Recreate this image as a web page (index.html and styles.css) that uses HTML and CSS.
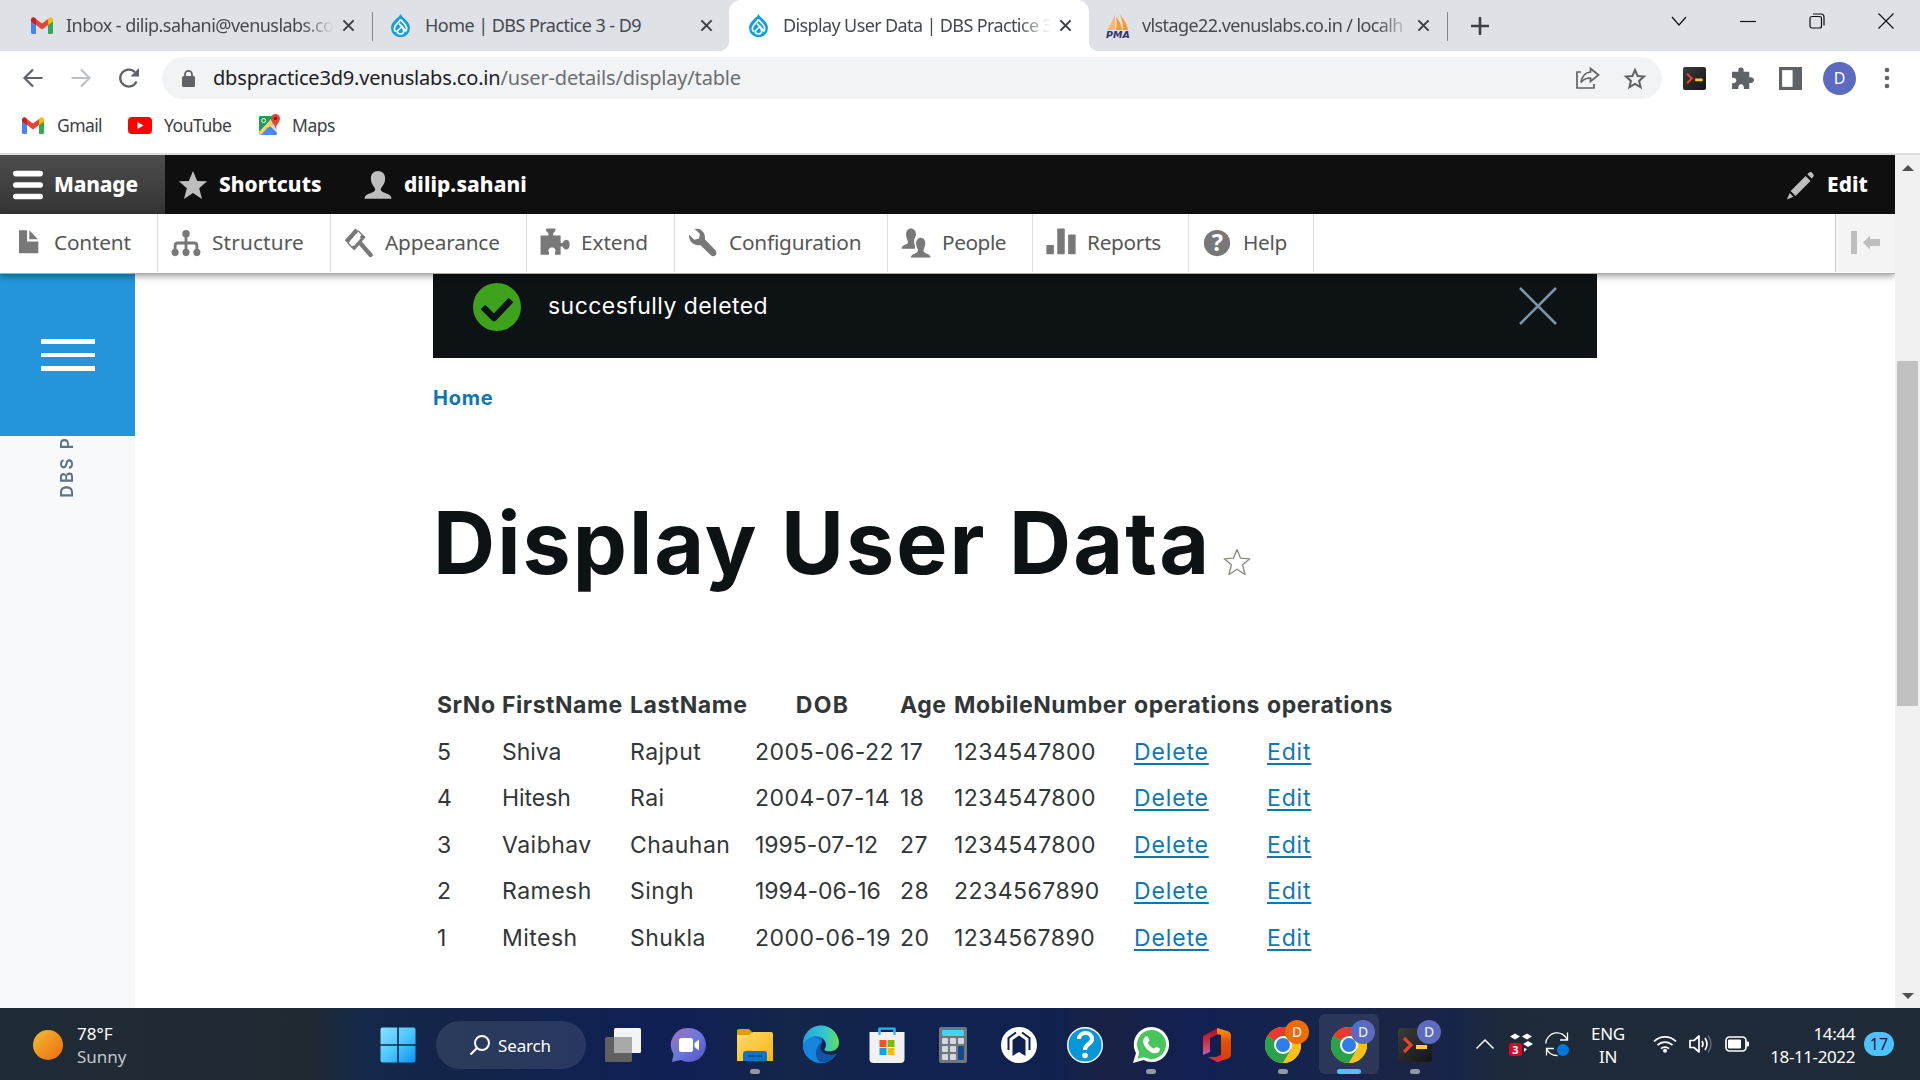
FILE: index.html
```html
<!DOCTYPE html>
<html lang="en">
<head>
<meta charset="utf-8">
<title>Display User Data | DBS Practice 3 - D9</title>
<link rel="stylesheet" href="styles.css">
</head>
<body>
<svg class="defs" width="0" height="0">
  <defs>
    <linearGradient id="win" x1="0" y1="0" x2="1" y2="1"><stop offset="0" stop-color="#8be0ff"/><stop offset=".5" stop-color="#4cc8fb"/><stop offset="1" stop-color="#0b93f5"/></linearGradient>
    <linearGradient id="sun" x1="0" y1="0" x2="1" y2="1"><stop offset="0" stop-color="#f0bd36"/><stop offset="1" stop-color="#f06a0c"/></linearGradient>
    <linearGradient id="chat" x1="0" y1="0" x2="1" y2="1"><stop offset="0" stop-color="#a770b4"/><stop offset=".5" stop-color="#6b78dc"/><stop offset="1" stop-color="#5450c4"/></linearGradient>
    <linearGradient id="folder" x1="0" y1="0" x2="1" y2="1"><stop offset="0" stop-color="#ffdb70"/><stop offset="1" stop-color="#f8b50c"/></linearGradient>
    <linearGradient id="edge1" x1="0" y1="0" x2="1" y2="0"><stop offset="0" stop-color="#22a7e0"/><stop offset=".6" stop-color="#35c5d0"/><stop offset="1" stop-color="#62e052"/></linearGradient>
    <linearGradient id="term" x1="0" y1="0" x2="1" y2="1"><stop offset="0" stop-color="#3b3b3d"/><stop offset="1" stop-color="#151515"/></linearGradient>
    <linearGradient id="office" x1="0" y1="0" x2="0" y2="1"><stop offset="0" stop-color="#ff9a10"/><stop offset=".4" stop-color="#e34f04"/><stop offset="1" stop-color="#d83b01"/></linearGradient>
    <linearGradient id="office2" x1="0" y1="0" x2="0" y2="1"><stop offset="0" stop-color="#a80f12"/><stop offset=".7" stop-color="#d04060"/><stop offset="1" stop-color="#b860c8"/></linearGradient>
    <symbol id="gmail" viewBox="0 0 22 17"><path d="M0 3v12.500A1.500 1.500 0 0 0 1.500 17H5V6z" fill="#4285f4"/><path d="M22 3v12.500A1.500 1.500 0 0 1 20.500 17H17V6z" fill="#34a853"/><path d="M5 2l6 4.500L17 2v6l-6 4.500L5 8z" fill="#ea4335"/><path d="M0 2.500C0 .3 2.300-.6 4 .8L5 2v6L0 4.500z" fill="#c5221f"/><path d="M22 2.500C22 .3 19.700-.6 18 .8L17 2v6l5-3.500z" fill="#fbbc04"/></symbol>
    <symbol id="drupal" viewBox="0 0 19 23"><path d="M9.500 0C11 4 19 7 19 14a9.500 9.200 0 0 1-19 0C0 7 8 4 9.500 0z" fill="#0f9fe0"/><path d="M9.500 5.500C7.500 9 3.500 11 3.300 14.500c0 1.500.6 2.500 1.500 3.200M8 9.500l6.200 6.700M9.500 5.500C12 9 15.700 11 15.700 14.500c0 1.500-.6 2.500-1.500 3.200M11 12.500L6.200 17c0 4 6.600 4 6.600 0z" fill="none" stroke="#fff" stroke-width="1.700"/></symbol>
    <symbol id="x" viewBox="0 0 14 14"><path d="M1.500 1.500l11 11M12.500 1.500l-11 11" stroke="#3c4043" stroke-width="2.200"/></symbol>
    <symbol id="terminal" viewBox="0 0 34 34"><rect width="34" height="34" rx="3" fill="url(#term)"/><path d="M6 10l7 7-7 7" fill="none" stroke="#e8402f" stroke-width="3.200"/><rect x="18" y="17" width="11" height="4" fill="#ffcb2e"/></symbol>
    <symbol id="chrome" viewBox="0 0 36 36"><circle cx="18" cy="18" r="18" fill="#fbc116"/><path d="M18 18L2.400 9A18 18 0 0 1 33.600 9z" fill="#e33b2e"/><path d="M18 18L2.400 9A18 18 0 0 0 18 36l8-13.500z" fill="#2aa24c"/><path d="M18 9h15.600A18 18 0 0 1 18 36l8-13.500z" fill="#fbc116"/><circle cx="18" cy="18" r="9" fill="#fff"/><circle cx="18" cy="18" r="7" fill="#2f7de9"/></symbol>
  </defs>
</svg>

<header class="tabs">
  <div class="tab tab-1"><svg class="fav mail"><use href="#gmail"/></svg><span class="tab-title fade">Inbox - dilip.sahani@venuslabs.co</span><svg class="close"><use href="#x"/></svg></div>
  <div class="tab tab-2"><svg class="fav drop"><use href="#drupal"/></svg><span class="tab-title">Home | DBS Practice 3 - D9</span><svg class="close"><use href="#x"/></svg></div>
  <div class="tab tab-3"><svg class="fav drop"><use href="#drupal"/></svg><span class="tab-title fade">Display User Data | DBS Practice 3</span><svg class="close"><use href="#x"/></svg></div>
  <div class="tab tab-4"><svg class="fav pma" viewBox="0 0 24 24"><path d="M9 1v15H1c3-4 5-9 8-15z" fill="#f7b877"/><path d="M10 3c1 5 1 9 0 13h6C15 10 13 6 10 3zM13 0c4 4 8 9 9 16h-5C17 9 16 4 13 0z" fill="#f8992d"/><text x="0" y="23.500" class="pma-text">PMA</text></svg><span class="tab-title fade">vlstage22.venuslabs.co.in / localh</span><svg class="close"><use href="#x"/></svg></div>
  <svg class="plus" viewBox="0 0 18 18"><path d="M9 0v18M0 9h18" stroke="#3c4043" stroke-width="2.600"/></svg>
  <div class="window-controls">
    <svg viewBox="0 0 16 16"><path d="M1 4l7 8 7-8" fill="none" stroke="#111" stroke-width="1.200"/></svg>
    <svg viewBox="0 0 16 16"><path d="M0 8.500h16" stroke="#111" stroke-width="1.200"/></svg>
    <svg viewBox="0 0 16 16"><rect x="1" y="3.500" width="11.500" height="11.500" rx="2" fill="none" stroke="#111" stroke-width="1.200"/><path d="M4 1h8a3 3 0 0 1 3 3v8.500" fill="none" stroke="#111" stroke-width="1.200"/></svg>
    <svg viewBox="0 0 16 16"><path d="M.5.5l15 15M15.500.5l-15 15" stroke="#111" stroke-width="1.200"/></svg>
  </div>
</header>

<nav class="nav">
  <div class="nav-buttons">
    <svg viewBox="0 0 20 20"><path d="M19.500 10H2M10 1.500L1.500 10l8.500 8.500" fill="none" stroke="#5f6368" stroke-width="2.200"/></svg>
    <svg viewBox="0 0 20 20"><path d="M.5 10H18M10 1.500l8.500 8.500-8.500 8.500" fill="none" stroke="#bdc0c3" stroke-width="2.200"/></svg>
    <svg viewBox="0 0 20 20"><path d="M17.500 13.500A8.500 8.500 0 1 1 16 4.300" fill="none" stroke="#5f6368" stroke-width="2.300"/><path d="M20 0v8.500h-8.500z" fill="#5f6368"/></svg>
  </div>
  <div class="omnibox">
    <svg class="lock" viewBox="0 0 13 17"><rect y="6" width="13" height="11" rx="1.500" fill="#5f6368"/><path d="M3 7V4.300a3.500 3.500 0 0 1 7 0V7" fill="none" stroke="#5f6368" stroke-width="1.800"/></svg>
    <span class="url"><b>dbspractice3d9.venuslabs.co.in</b>/user-details/display/table</span>
    <svg class="share" viewBox="0 0 24 22"><path d="M5 5H1v16h17v-4" fill="none" stroke="#5f6368" stroke-width="1.700"/><path d="M14.500 1.500L22.500 8l-8 6.500V11C10 11 7.500 12 5 15.500 6 9 9 5.500 14.500 5z" fill="none" stroke="#5f6368" stroke-width="1.700"/></svg>
    <svg class="fav-star" viewBox="0 0 22 21"><path d="M11 2l2.600 6 6.400.6-4.900 4.300 1.500 6.300L11 15.900l-5.600 3.300 1.500-6.300L2 8.600 8.400 8z" fill="none" stroke="#5f6368" stroke-width="2"/></svg>
  </div>
  <div class="extensions">
    <svg><use href="#terminal"/></svg>
    <svg viewBox="0 0 22 22"><path d="M1 4.500h6.200C5.500-1 13.500-1 12 4.500h5.500V10c6-1.500 6 6.500 0 5v6h-5.200c1-6-6.300-6-5.300 0H1v-5.500c5.500 1 5.500-6 0-5z" fill="#5f6368"/></svg>
    <svg viewBox="0 0 22 22"><rect x="1.500" y="1.500" width="19" height="19" fill="none" stroke="#5f6368" stroke-width="3"/><rect x="13" y="1" width="8" height="20" fill="#5f6368"/></svg>
  </div>
  <div class="avatar">D</div>
  <svg class="dots" viewBox="0 0 6 22"><circle cx="3" cy="3" r="2.300" fill="#5f6368"/><circle cx="3" cy="11" r="2.300" fill="#5f6368"/><circle cx="3" cy="19" r="2.300" fill="#5f6368"/></svg>
</nav>

<div class="bookmarks">
  <svg class="bm-icon"><use href="#gmail"/></svg><span class="bm bm-gmail">Gmail</span>
  <svg class="bm-icon yt" viewBox="0 0 24 17"><rect width="24" height="17" rx="4" fill="#f00"/><path d="M9.500 5v7l6-3.500z" fill="#fff"/></svg><span class="bm bm-yt">YouTube</span>
  <svg class="bm-icon maps" viewBox="0 0 21 22"><rect x="0" y="2" width="18" height="19" rx="2" fill="#3d84ee"/><path d="M0 4a2 2 0 0 1 2-2h12L0 17z" fill="#1f9d54"/><path d="M0 18L15 2l3 3L3 21H2a2 2 0 0 1-2-2z" fill="#fdd34d"/><path d="M9 13l9 8H2z" fill="#4b8bf5"/><path d="M11 12l7-5v12z" fill="#d8dadd"/><path d="M16.500 0a4.500 4.500 0 0 1 4.500 4.500c0 4-3.700 5-4.500 10.500-.8-5.500-4.500-6.500-4.500-10.500A4.500 4.500 0 0 1 16.500 0z" fill="#e24536"/><circle cx="16.500" cy="4.500" r="1.700" fill="#7d1c14"/><circle cx="4.700" cy="6.500" r="2" fill="none" stroke="#fff"/></svg><span class="bm">Maps</span>
</div>

<div class="viewport">
  <div class="page">
    <div class="admin-bar">
      <div class="admin-tab manage"><svg viewBox="0 0 16 16"><path d="M1.500 1.900h13M1.500 8h13M1.500 14.100h13" stroke="#fff" stroke-width="3" stroke-linecap="round"/></svg><span>Manage</span></div>
      <div class="admin-tab shortcuts"><svg viewBox="0 0 16 16"><path d="M8 .5l2.200 5.300 5.300.2-4.200 3.700 1.500 5.700L8 12.300l-4.800 3.100 1.500-5.700L.5 6l5.300-.2z" fill="#bebebe"/></svg><span>Shortcuts</span></div>
      <div class="admin-tab user"><svg viewBox="0 0 16 16"><path d="M.8 15.300c0-3.300 5.400-2.500 5.700-4.800.1-1.500-2.300-2.500-2.300-6C4.200 2 5.700.5 8 .5s3.800 1.500 3.800 4c0 3.500-2.400 4.500-2.300 6 .3 2.300 5.700 1.500 5.700 4.800z" fill="#bebebe"/></svg><span>dilip.sahani</span></div>
      <div class="admin-tab edit"><svg viewBox="0 0 16 16"><path d="M11 3.200l2.600 2.600-8 8L3 11.200zM11.900 2.300l.8-.9c.6-.6 1.400-.3 2 .3.600.6.9 1.400.3 2l-.8.8zM2.500 12.200l2 2L1 15.700z" fill="#bebebe"/></svg><span>Edit</span></div>
    </div>
    <div class="tray">
      <div class="menu m1"><svg viewBox="0 0 16 16"><path d="M3.200 1.200h4.300v6h6v6.300H3.200zM8.700 1.200l4.600 4.800H8.700z"/></svg><span>Content</span></div>
      <div class="menu m2"><svg viewBox="0 0 16 16"><circle cx="8" cy="3" r="2"/><ellipse cx="2.200" cy="13" rx="1.900" ry="2"/><ellipse cx="8" cy="13" rx="1.900" ry="2"/><ellipse cx="13.800" cy="13" rx="1.900" ry="2"/><path d="M8 3v10M2.200 12V9.500q0-1.500 1.500-1.500h8.600q1.500 0 1.500 1.500V12" class="line"/></svg><span>Structure</span></div>
      <div class="menu m3"><svg viewBox="0 0 16 16"><path d="M.4 6.500L6 .2l1.800 1.500L2.200 8.200z"/><path d="M7.500 1.500l3.500 3.500-5.500 6.500-3.500-3.500" fill="none" stroke="#787878" stroke-width=".7"/><path d="M11.200 4.800L5.500 11.600 4 10.200l5.600-6.800z"/><path d="M9 8.500l5.200 5.900" stroke="#787878" stroke-width="2.300" stroke-linecap="round"/><path d="M6.500 3.200l2.500 2.200-3.700 4.200-2.300-2.300z" fill="#fff"/></svg><span>Appearance</span></div>
      <div class="menu m4"><svg viewBox="0 0 16 16"><path d="M.3 4h4.200V2.800L3.300 1.600V.3h4.900v1.300L7 2.800V4h4v4h1c.6-1.200 1.500-1.700 2.300-1.700 2 0 2 5.200 0 5.200-.8 0-1.700-.5-2.300-1.700h-1v4.500H8V13c1.800-3.500-5-3.500-3.200 0v1.300H.3z"/></svg><span>Extend</span></div>
      <div class="menu m5"><svg viewBox="0 0 16 16"><path d="M3.500.5C6.500-.3 9.500 2 9 6l5.700 6c1.500 2-.8 4-2.500 2.500L6.500 9C3 9.800.3 7 .5 3.500l2.800 2.700 2.600-.6.400-2.500z"/></svg><span>Configuration</span></div>
      <div class="menu m6"><svg viewBox="0 0 16 16"><path d="M.3 11c0-2.400 3.400-1.800 3.400-3.400 0-1-1-2-1-4C2.700 1.500 3.800.3 5.300.3S8 1.500 8 3.500c0 1-1 2-1 3.500 0 2 1 3 .3 4z"/><path d="M5 16c0-2.800 3.800-2.200 3.800-4 0-1-1-1.800-1-3.700 0-2 1.200-3.300 2.700-3.300s2.700 1.300 2.700 3.300c0 1.900-1 2.700-1 3.700 0 1.800 3.800 1.200 3.800 4z" stroke="#fff" stroke-width=".5"/></svg><span>People</span></div>
      <div class="menu m7"><svg viewBox="0 0 16 16"><rect x=".2" y="9" width="4" height="5" rx=".4"/><rect x="6" y=".2" width="4" height="13.800" rx=".4"/><rect x="11.800" y="3.500" width="4" height="10.500" rx=".4"/></svg><span>Reports</span></div>
      <div class="menu m8"><svg viewBox="0 0 16 16"><circle cx="8" cy="8" r="7"/><text x="8" y="12.500" class="q">?</text></svg><span>Help</span></div>
      <div class="toggle"><svg viewBox="0 0 30 24"><rect width="6" height="23" fill="#bebebe"/><path d="M12 11.500l7-7V8h10v7H19v3.500z" fill="#bebebe"/></svg></div>
    </div>

    <div class="columns">
      <aside class="side">
        <div class="burger"><i></i><i></i><i></i></div>
        <div class="site-name"><span>DBS P</span></div>
      </aside>
      <main class="main">
        <div class="message">
          <svg class="ok" viewBox="0 0 48 48"><circle cx="24" cy="24" r="24" fill="#3fa21c"/><path d="M10 24l11 11 17-18" fill="none" stroke="#0d1214" stroke-width="6.500" stroke-linejoin="round"/></svg>
          <span>succesfully deleted</span>
          <svg class="dismiss" viewBox="0 0 38 38"><path d="M1 1l36 36M37 1L1 37" stroke="#7e96a7" stroke-width="2.600"/></svg>
        </div>
        <a class="crumb">Home</a>
        <h1><span>Display User Data</span><svg viewBox="0 0 28 28"><path d="M14 1.500l3.500 8.700 9.300.6-7.200 6 2.400 9.700-8-5.300-8 5.300 2.400-9.700-7.200-6 9.300-.6z" fill="none" stroke="#8a8a7a" stroke-width="1.300" stroke-linejoin="round"/></svg></h1>
        <table>
          <thead><tr><th>SrNo</th><th>FirstName</th><th>LastName</th><th class="dob">DOB</th><th>Age</th><th>MobileNumber</th><th>operations</th><th>operations</th></tr></thead>
          <tbody>
            <tr><td>5</td><td class="tight">Shiva</td><td>Rajput</td><td>2005-06-22</td><td>17</td><td>1234547800</td><td><a>Delete</a></td><td><a>Edit</a></td></tr>
            <tr><td>4</td><td class="tight">Hitesh</td><td>Rai</td><td>2004-07-14</td><td>18</td><td>1234547800</td><td><a>Delete</a></td><td><a>Edit</a></td></tr>
            <tr><td>3</td><td>Vaibhav</td><td>Chauhan</td><td class="tight">1995-07-12</td><td>27</td><td>1234547800</td><td><a>Delete</a></td><td><a>Edit</a></td></tr>
            <tr><td>2</td><td>Ramesh</td><td>Singh</td><td class="tight">1994-06-16</td><td>28</td><td>2234567890</td><td><a>Delete</a></td><td><a>Edit</a></td></tr>
            <tr><td>1</td><td>Mitesh</td><td>Shukla</td><td>2000-06-19</td><td>20</td><td>1234567890</td><td><a>Delete</a></td><td><a>Edit</a></td></tr>
          </tbody>
        </table>
      </main>
    </div>
  </div>
  <div class="scrollbar"><i class="up"></i><i class="thumb"></i><i class="down"></i></div>
</div>

<footer class="taskbar">
  <div class="weather"><svg viewBox="0 0 30 30"><circle cx="15" cy="15" r="15" fill="url(#sun)"/></svg><div class="lines"><span>78°F</span><br><span class="dim">Sunny</span></div></div>
  <div class="slot start"><svg viewBox="0 0 36 36"><path d="M.5 2.500a2 2 0 0 1 2-2h14.700v16.700H.5zM18.800.5h14.700a2 2 0 0 1 2 2v14.700H18.800zM.5 18.800h16.700v16.700H2.500a2 2 0 0 1-2-2zM18.800 18.800h16.700v14.700a2 2 0 0 1-2 2H18.800z" fill="url(#win)"/></svg></div>
  <div class="search"><svg viewBox="0 0 20 20"><circle cx="12" cy="8" r="7" fill="none" stroke="#fff" stroke-width="2"/><path d="M7 13l-6.500 6.500" stroke="#fff" stroke-width="2.200"/></svg><span class="lines">Search</span></div>
  <div class="slot"><svg viewBox="0 0 36 36"><rect x="9" y="1" width="27" height="25" rx="1.500" fill="#f4f4f4"/><rect y="10" width="27" height="25" rx="1.500" fill="#606060"/><rect x="9" y="10" width="18" height="16" fill="#a9a9a9"/></svg></div>
  <div class="slot"><svg viewBox="0 0 36 36"><path d="M18 1a17 17 0 1 1-8 32L1 35l1.500-8A17 17 0 0 1 18 1z" fill="url(#chat)"/><rect x="8" y="11" width="14" height="14" rx="2.500" fill="#fff"/><path d="M23.500 16l4.500-3.500v11L23.500 20z" fill="#fff"/></svg></div>
  <div class="slot open"><svg viewBox="0 0 36 36"><path d="M0 4a2 2 0 0 1 2-2h10l4 4-4 6H0z" fill="#e09d07"/><path d="M0 8h12l4-3h18a2 2 0 0 1 2 2v27H0z" fill="url(#folder)"/><path d="M6 34V27a3 3 0 0 1 3-3h18a3 3 0 0 1 3 3v7z" fill="#0f73c8"/><path d="M11 29h14" stroke="#064f94" stroke-width="1.800"/></svg></div>
  <div class="slot"><svg viewBox="0 0 36 36"><path d="M18 0A18 18 0 1 0 33.500 27C24 31 13 25 19 15L18 0z" fill="#0c6ed0"/><path d="M0 16C3 8 14 8 19 15c-9 3-6 18 7 19A18 18 0 0 1 0 16z" fill="#1685dd"/><path d="M20 15c-7 7-1 15 13.500 12-4 6-10 8.500-16 8.500-7-5-6-16 2.500-20.500z" fill="#0e55a3"/><path d="M0 17A18 18 0 0 1 36 16c0 7-8 10-14 7.500-1.500-1 1-2 1-6C22 8 8 5 0 17z" fill="url(#edge1)"/></svg></div>
  <div class="slot"><svg viewBox="0 0 36 36"><path d="M10.500 7V1.700h15V7" fill="none" stroke="#26b6f1" stroke-width="2.200"/><path d="M.5 5h35v27a4 4 0 0 1-4 4h-27a4 4 0 0 1-4-4z" fill="#f1f1f1"/><path d="M10.500 8V2M25.500 2v6" stroke="#26b6f1" stroke-width="2.200"/><path d="M10.500 13h7v7h-7z" fill="#f25022"/><path d="M18.500 13h7v7h-7z" fill="#7fba00"/><path d="M10.500 21h7v7h-7z" fill="#00a4ef"/><path d="M18.500 21h7v7h-7z" fill="#ffb900"/></svg></div>
  <div class="slot"><svg viewBox="0 0 36 36"><rect x="4" width="28" height="36" rx="2" fill="#6f7780"/><rect x="7" y="3" width="22" height="6" rx="1" fill="#3fd3f6"/><g fill="#d3d8de"><rect x="7" y="11" width="6" height="6" rx="1"/><rect x="15" y="11" width="6" height="6" rx="1"/><rect x="23" y="11" width="6" height="6" rx="1"/><rect x="7" y="19" width="6" height="6" rx="1"/><rect x="15" y="19" width="6" height="6" rx="1"/><rect x="7" y="27" width="6" height="6" rx="1"/><rect x="15" y="27" width="6" height="6" rx="1"/></g><rect x="23" y="19" width="6" height="14" rx="1" fill="#124a8c"/></svg></div>
  <div class="slot"><svg viewBox="0 0 36 36"><circle cx="18" cy="18" r="18" fill="#fff"/><path d="M15 5.500l-7.500 5.500v12M21 5.500l7.500 5.500v12" fill="none" stroke="#10214f" stroke-width="2"/><path d="M11.500 29V13L18 8.500l6.500 4.500v16L18 25z" fill="#10214f"/></svg></div>
  <div class="slot"><svg viewBox="0 0 36 36"><circle cx="18" cy="18" r="17.300" fill="#0796d8" stroke="#fff" stroke-width="1.400"/><path d="M12 12c0-8 13-8 13 0 0 5-7 5-7 11" fill="none" stroke="#fff" stroke-width="4.200"/><circle cx="18" cy="28.500" r="2.800" fill="#fff"/></svg></div>
  <div class="slot open"><svg viewBox="0 0 36 36"><path d="M18.500 0a17.500 17.500 0 1 1-8 33L0 36l3-10A17.500 17.500 0 0 1 18.500 0z" fill="#fff"/><path d="M18.500 3a14.500 14.500 0 1 1-7.300 27L4.500 31.700l1.800-6.400A14.500 14.500 0 0 1 18.500 3z" fill="#48c55b"/><path d="M12 10c1-1 2.500-1 3 .3l1.300 3c.3 1-1.500 2-1.300 2.700 1 2.500 3 4.500 5.800 5.500 1 .2 1.700-2.200 2.700-1.800l3 1.500c1.200.7.2 3-1 4-4 3-10-.5-13-5C9.500 16 9.500 12.500 12 10z" fill="#fff"/></svg></div>
  <div class="slot"><svg viewBox="0 0 36 36"><path d="M4 9l15-8v6l-8 4v14l-7 3z" fill="url(#office2)"/><path d="M18 1l10 3a5 5 0 0 1 4 4v20a5 5 0 0 1-4 4l-10 3-1-5 5-2V8l-4-1z" fill="url(#office)"/><path d="M9 30h9l4-2v6l-4 1z" fill="#e02a4a"/></svg></div>
  <div class="slot open"><svg><use href="#chrome"/></svg><b class="badge orange">D</b></div>
  <div class="slot open active"><svg><use href="#chrome"/></svg><b class="badge">D</b></div>
  <div class="slot open"><svg class="t"><use href="#terminal"/></svg><b class="badge">D</b></div>
  <div class="systray">
    <svg class="s1" viewBox="0 0 18 10"><path d="M.5 9.500L9 1l8.500 8.500" fill="none" stroke="#fff" stroke-width="1.500"/></svg>
    <svg class="s2" viewBox="0 0 24 23"><path d="M1 3.500L6 .5l5 3-5 3zM13 3.500l5-3 5 3-5 3zM14 11l5-3 5 3-5 3zM15 15l3 1-3 3z" fill="#fff"/><rect y="10" width="13" height="13" rx="2.500" fill="#d9042b"/><text x="6.500" y="21" class="three">3</text></svg>
    <svg class="s3" viewBox="0 0 24 24"><path d="M.7 11.500A11.300 11.300 0 0 1 22.500 8M22.500.5V8H15M1.500 23.500v-7H9M1.500 16.500a11.500 11.500 0 0 0 11 7" fill="none" stroke="#fff" stroke-width="1.300"/><circle cx="18" cy="18" r="6" fill="#0078d7"/></svg>
    <div class="lang lines">ENG<br>IN</div>
    <svg class="s4" viewBox="0 0 24 18"><path d="M1 6.500a15.500 15.500 0 0 1 22 0M4.500 10.200a10.500 10.500 0 0 1 15 0M8 13.700a5.700 5.700 0 0 1 8 0" fill="none" stroke="#fff" stroke-width="1.700"/><circle cx="12" cy="15.700" r="2" fill="#fff"/></svg>
    <svg class="s5" viewBox="0 0 24 20"><path d="M1 6.500h4L10 2v16l-5-4.500H1z" fill="none" stroke="#fff" stroke-width="1.700" stroke-linejoin="round"/><path d="M13 7q2 3 0 6M16 4q4 6 0 12" fill="none" stroke="#fff" stroke-width="1.700"/><path d="M19 1.500q6 8.500 0 17" fill="none" stroke="#5b6570" stroke-width="1.700"/></svg>
    <svg class="s6" viewBox="0 0 24 16"><rect x="1" y="1" width="20" height="14" rx="3.500" fill="none" stroke="#fff" stroke-width="1.700"/><rect x="3" y="3.500" width="13" height="9" rx="1" fill="#fff"/><rect x="21.500" y="5.500" width="2.500" height="5" rx="1" fill="#fff"/></svg>
    <div class="clock lines">14:44<br>18-11-2022</div>
    <div class="count">17</div>
  </div>
</footer>
</body>
</html>
```

FILE: styles.css
```css
* { box-sizing: border-box; }
body {
  margin: 0;
  width: 1920px;
  height: 1080px;
  overflow: hidden;
  background: #fff;
  font-family: "Noto Sans", "Open Sans", sans-serif;
  display: flex;
  flex-direction: column;
}
svg { display: block; flex: none; overflow: visible; }
span { white-space: nowrap; }
.defs { position: absolute; }

/* Tab strip */
.tabs { display: flex; align-items: center; height: 51px; background: #dee1e6; flex: none; }
.tab { display: flex; align-items: center; height: 51px; font-size: 18px; color: #45494d; position: relative; }
.tab-title { overflow: hidden; flex: none; line-height: 30px; letter-spacing: -.54px; margin-top: -1px; }
.fade { -webkit-mask-image: linear-gradient(90deg, #000 236px, transparent 268px); mask-image: linear-gradient(90deg, #000 236px, transparent 268px); }
.close { width: 13px; height: 13px; }
.fav { margin-right: 14px; }
.mail { width: 22px; height: 17px; margin-right: 13px; }
.drop { width: 19px; height: 23px; margin-right: 15px; }
.pma { width: 24px; height: 24px; margin-right: 12px; }
.pma-text { font: italic bold 9.500px "DejaVu Sans", sans-serif; fill: #33336b; }
.tab-1 { width: 372px; padding-left: 31px; }
.tab-1 .tab-title { width: 276px; }
.tab-2 { width: 357px; padding-left: 19px; }
.tab-2 .tab-title { width: 275px; }
.tab-3 { width: 360px; padding-left: 20px; background: #fff; border-radius: 12px 12px 0 0; }
.tab-3 .tab-title { width: 276px; letter-spacing: -.62px; }
.tab-4 { width: 358px; padding-left: 17px; }
.tab-4 .tab-title { width: 275px; letter-spacing: -.6px; }
.tab-1::after, .tab-4::after { content: ""; position: absolute; right: -1px; top: 12px; width: 1px; height: 29px; background: #85888c; }
.tab-3::before, .tab-3::after { content: ""; position: absolute; bottom: 0; width: 10px; height: 10px; }
.tab-3::before { left: -10px; background: radial-gradient(circle at 0 0, transparent 10px, #fff 10.500px); }
.tab-3::after { right: -10px; background: radial-gradient(circle at 100% 0, transparent 10px, #fff 10.500px); }
.plus { width: 18px; height: 18px; margin-left: 24px; }
.window-controls { display: flex; gap: 53px; margin-left: 182px; margin-top: -9px; }
.window-controls svg { width: 16px; height: 16px; }

/* Address row */
.nav { display: flex; align-items: center; height: 54px; flex: none; }
.nav-buttons { display: flex; gap: 28px; width: 162px; padding-left: 23px; }
.nav-buttons svg { width: 20px; height: 20px; }
.omnibox { display: flex; align-items: center; width: 1500px; height: 42px; border-radius: 21px; background: #f1f3f4; padding-left: 20px; }
.lock { width: 13px; height: 17px; margin-right: 18px; }
.url { width: 1363px; font-size: 20px; letter-spacing: -.18px; color: #6b6f73; line-height: 30px; }
.url b { font-weight: 400; color: #202124; }
.share { width: 24px; height: 22px; margin-right: 24px; }
.fav-star { width: 22px; height: 21px; }
.extensions { display: flex; gap: 25px; padding-left: 21px; width: 161px; }
.extensions svg { width: 23px; height: 23px; }
.avatar { width: 33px; height: 33px; border-radius: 50%; background: #5c6bc0; color: #fff; font-size: 16px; line-height: 33px; text-align: center; }
.dots { width: 6px; height: 22px; margin-left: 28px; }

/* Bookmarks */
.bookmarks { display: flex; align-items: center; height: 50px; padding: 0 0 7px 22px; border-bottom: 2px solid #dcdcdc; flex: none; font-size: 17.500px; letter-spacing: -.46px; color: #3c4043; }
.bm { margin-top: -1px; }
.bm-icon { width: 22px; height: 17px; margin-right: 13px; }
.bm-icon.yt { width: 24px; margin-right: 12px; }
.bm-icon.maps { width: 21px; height: 22px; margin: -1px 12px 0 -1px; }
.bm-gmail { width: 71px; letter-spacing: -.59px; }
.bm-yt { width: 96px; }

/* Page area */
.viewport { display: flex; height: 853px; flex: none; }
.page { width: 1895px; display: flex; flex-direction: column; overflow: hidden; }
.scrollbar { width: 25px; background: #f1f1f1; display: flex; flex-direction: column; align-items: center; padding-top: 10px; }
.up { border: 6px solid transparent; border-top: 0; border-bottom: 6px solid #505050; }
.thumb { width: 21px; height: 345px; background: #c1c1c1; margin-top: 190px; }
.down { border: 6px solid transparent; border-bottom: 0; border-top: 6px solid #505050; margin-top: 287px; }

/* Administration toolbar */
.admin-bar { display: flex; height: 59px; background: #0f0f0f; flex: none; }
.admin-tab { display: flex; align-items: center; padding-left: 13px; color: #fff; font-weight: 800; font-size: 20.800px; letter-spacing: .1px; }
.admin-tab svg, .menu svg { width: 30px; height: 30px; margin-right: 11px; }
.admin-tab span, .menu span { margin-top: -2px; }
.manage { width: 165px; background: linear-gradient(#4d4d4d, #343434); letter-spacing: -.15px; }
.shortcuts { width: 185px; }
.edit { margin-left: auto; width: 123px; }
.edit svg { margin-right: 12px; }

.tray { display: flex; height: 60px; background: #fff; border-bottom: 1px solid #aaa; box-shadow: 0 2px 7px rgba(0,0,0,.4); position: relative; z-index: 2; flex: none; }
.menu { display: flex; align-items: center; padding-left: 13px; border-right: 1px solid #ddd; font-size: 20.800px; letter-spacing: -.2px; color: #565656; height: 58px; }
.menu svg { fill: #787878; }
.menu .line { fill: none; stroke: #787878; stroke-width: 1.500; }
.menu .q { fill: #fff; font-size: 12.500px; font-weight: 700; text-anchor: middle; }
.m1 { width: 158px; }
.m2 { width: 173px; letter-spacing: .15px; }
.m3 { width: 196px; }
.m4 { width: 148px; letter-spacing: -.08px; }
.m5 { width: 213px; }
.m6 { width: 145px; letter-spacing: -.45px; }
.m7 { width: 156px; letter-spacing: -.3px; }
.m8 { width: 125px; letter-spacing: -.3px; }
.toggle { margin-left: auto; width: 60px; height: 58px; background: #f4f4f4; border-left: 1px solid #ccc; padding: 17px 0 0 15px; }
.toggle svg { width: 30px; height: 24px; }

/* Site content */
.columns { display: flex; flex: 1; font-family: Inter, "Open Sans", sans-serif; }
.side { width: 135px; background: #f7f9fa; }
.burger { height: 162px; background: #2494db; display: flex; flex-direction: column; align-items: center; gap: 9px; padding: 65px 0 0 1px; }
.burger i { width: 54px; height: 4.500px; background: #fff; }
.site-name { display: flex; justify-content: center; padding-right: 1px; }
.site-name span { writing-mode: vertical-rl; transform: rotate(180deg); font-size: 17px; font-weight: 600; letter-spacing: 2.400px; color: #5b7385; }
.main { padding-left: 298px; color: #313637; }
.message { display: flex; width: 1164px; height: 84px; background: #0d1214; color: #fff; font-size: 23px; letter-spacing: .45px; padding: 9px 40px 0; }
.message svg { width: 48px; height: 48px; }
.message span { margin: 8px auto 0 27px; line-height: 30px; }
.message .dismiss { width: 38px; height: 38px; margin-top: 4px; }
.crumb { display: block; margin-top: 25px; font-size: 20px; letter-spacing: .8px; line-height: 30px; font-weight: 700; color: #0d77b5; }
h1 { display: flex; margin: 70px 0 0; font-size: 86px; line-height: 120px; font-weight: 700; letter-spacing: 2.050px; color: #0d1214; height: 120px; }
h1 span { width: 790px; }
h1 svg { width: 28px; height: 28px; margin-top: 65px; }
table { margin-top: 79px; table-layout: fixed; width: 970px; border-collapse: collapse; font-size: 23px; line-height: 30px; letter-spacing: .48px; }
th, td { padding: 0 0 0 4px; text-align: left; height: 46.500px; white-space: nowrap; }
th { font-weight: 700; letter-spacing: .52px; }
th.dob { text-align: center; padding-right: 6px; letter-spacing: 1.400px; }
td.tight { letter-spacing: -.05px; }
th:nth-child(1) { width: 65px; }
th:nth-child(2) { width: 128px; }
th:nth-child(3) { width: 125px; }
th:nth-child(4) { width: 145px; }
th:nth-child(5) { width: 54px; }
th:nth-child(6) { width: 180px; }
th:nth-child(7) { width: 133px; }
td a { color: #0d77b5; letter-spacing: .85px; text-decoration: underline; text-decoration-thickness: 2px; text-underline-offset: 3px; }

/* Taskbar */
.taskbar {
  display: flex;
  align-items: center;
  height: 72px;
  flex: none;
  color: #fff;
  font-size: 17px;
  line-height: 23px;
  background: linear-gradient(90deg, #1f2b37 0, #1f2932 310px, #14284a 365px, #122449 480px, #10224f 560px, #101f54 680px, #14264a 790px, #10224f 900px, #10214f 1050px, #1a2244 1110px, #111f52 1190px, #15244c 1300px, #1b2444 1420px, #17244a 1450px, #1e2a38 1510px, #1f2b37 100%);
}
.lines { padding-top: 2px; }
.weather { display: flex; align-items: center; width: 365px; padding-left: 33px; }
.weather svg { width: 30px; height: 30px; margin-right: 14px; margin-top: 1px; }
.dim { color: #c3c7ca; }
.slot { width: 66px; height: 60px; display: flex; justify-content: center; align-items: center; position: relative; }
.slot svg { width: 36px; height: 36px; margin-top: 1px; }
.slot .t { width: 34px; height: 34px; }
.start { margin-right: 5px; }
.search { display: flex; align-items: center; width: 150px; height: 48px; border-radius: 24px; background: rgba(255,255,255,.1); padding-left: 34px; margin-right: 4px; margin-top: 1px; letter-spacing: -.14px; }
.search svg { width: 20px; height: 20px; margin-right: 8px; }
.open::after { content: ""; position: absolute; bottom: 0; left: 28px; width: 10px; height: 5px; border-radius: 3px; background: #9299a6; }
.active { background: rgba(255,255,255,.09); border-radius: 6px; width: 60px; margin: 0 3px; }
.active::after { width: 24px; left: 18px; background: #4cc2ff; }
.badge { position: absolute; right: 7px; top: 6px; width: 24px; height: 24px; border-radius: 50%; background: #5c6bc0; font-size: 14px; font-weight: 500; line-height: 24px; text-align: center; color: #e4e6f5; }
.active .badge { right: 4px; }
.orange { background: #ee6c02; }
.systray { display: flex; align-items: center; margin-left: 28px; }
.s1 { width: 18px; height: 10px; margin-right: 15px; }
.s2 { width: 24px; height: 23px; margin-right: 12px; }
.s3 { width: 24px; height: 24px; margin-right: 19px; }
.three { fill: #fff; font-size: 11px; font-weight: 700; text-anchor: middle; }
.lang { width: 40px; text-align: center; margin-right: 25px; letter-spacing: -.25px; }
.s4 { width: 24px; height: 18px; margin-right: 12px; }
.s5 { width: 24px; height: 20px; margin-right: 12px; }
.s6 { width: 24px; height: 16px; margin-right: 17px; }
.clock { width: 89px; text-align: right; margin-right: 9px; letter-spacing: -.4px; }
.count { width: 30px; height: 24px; border-radius: 12px; background: #4cc2ff; color: #0b2030; font-size: 16px; line-height: 24px; text-align: center; }
```
